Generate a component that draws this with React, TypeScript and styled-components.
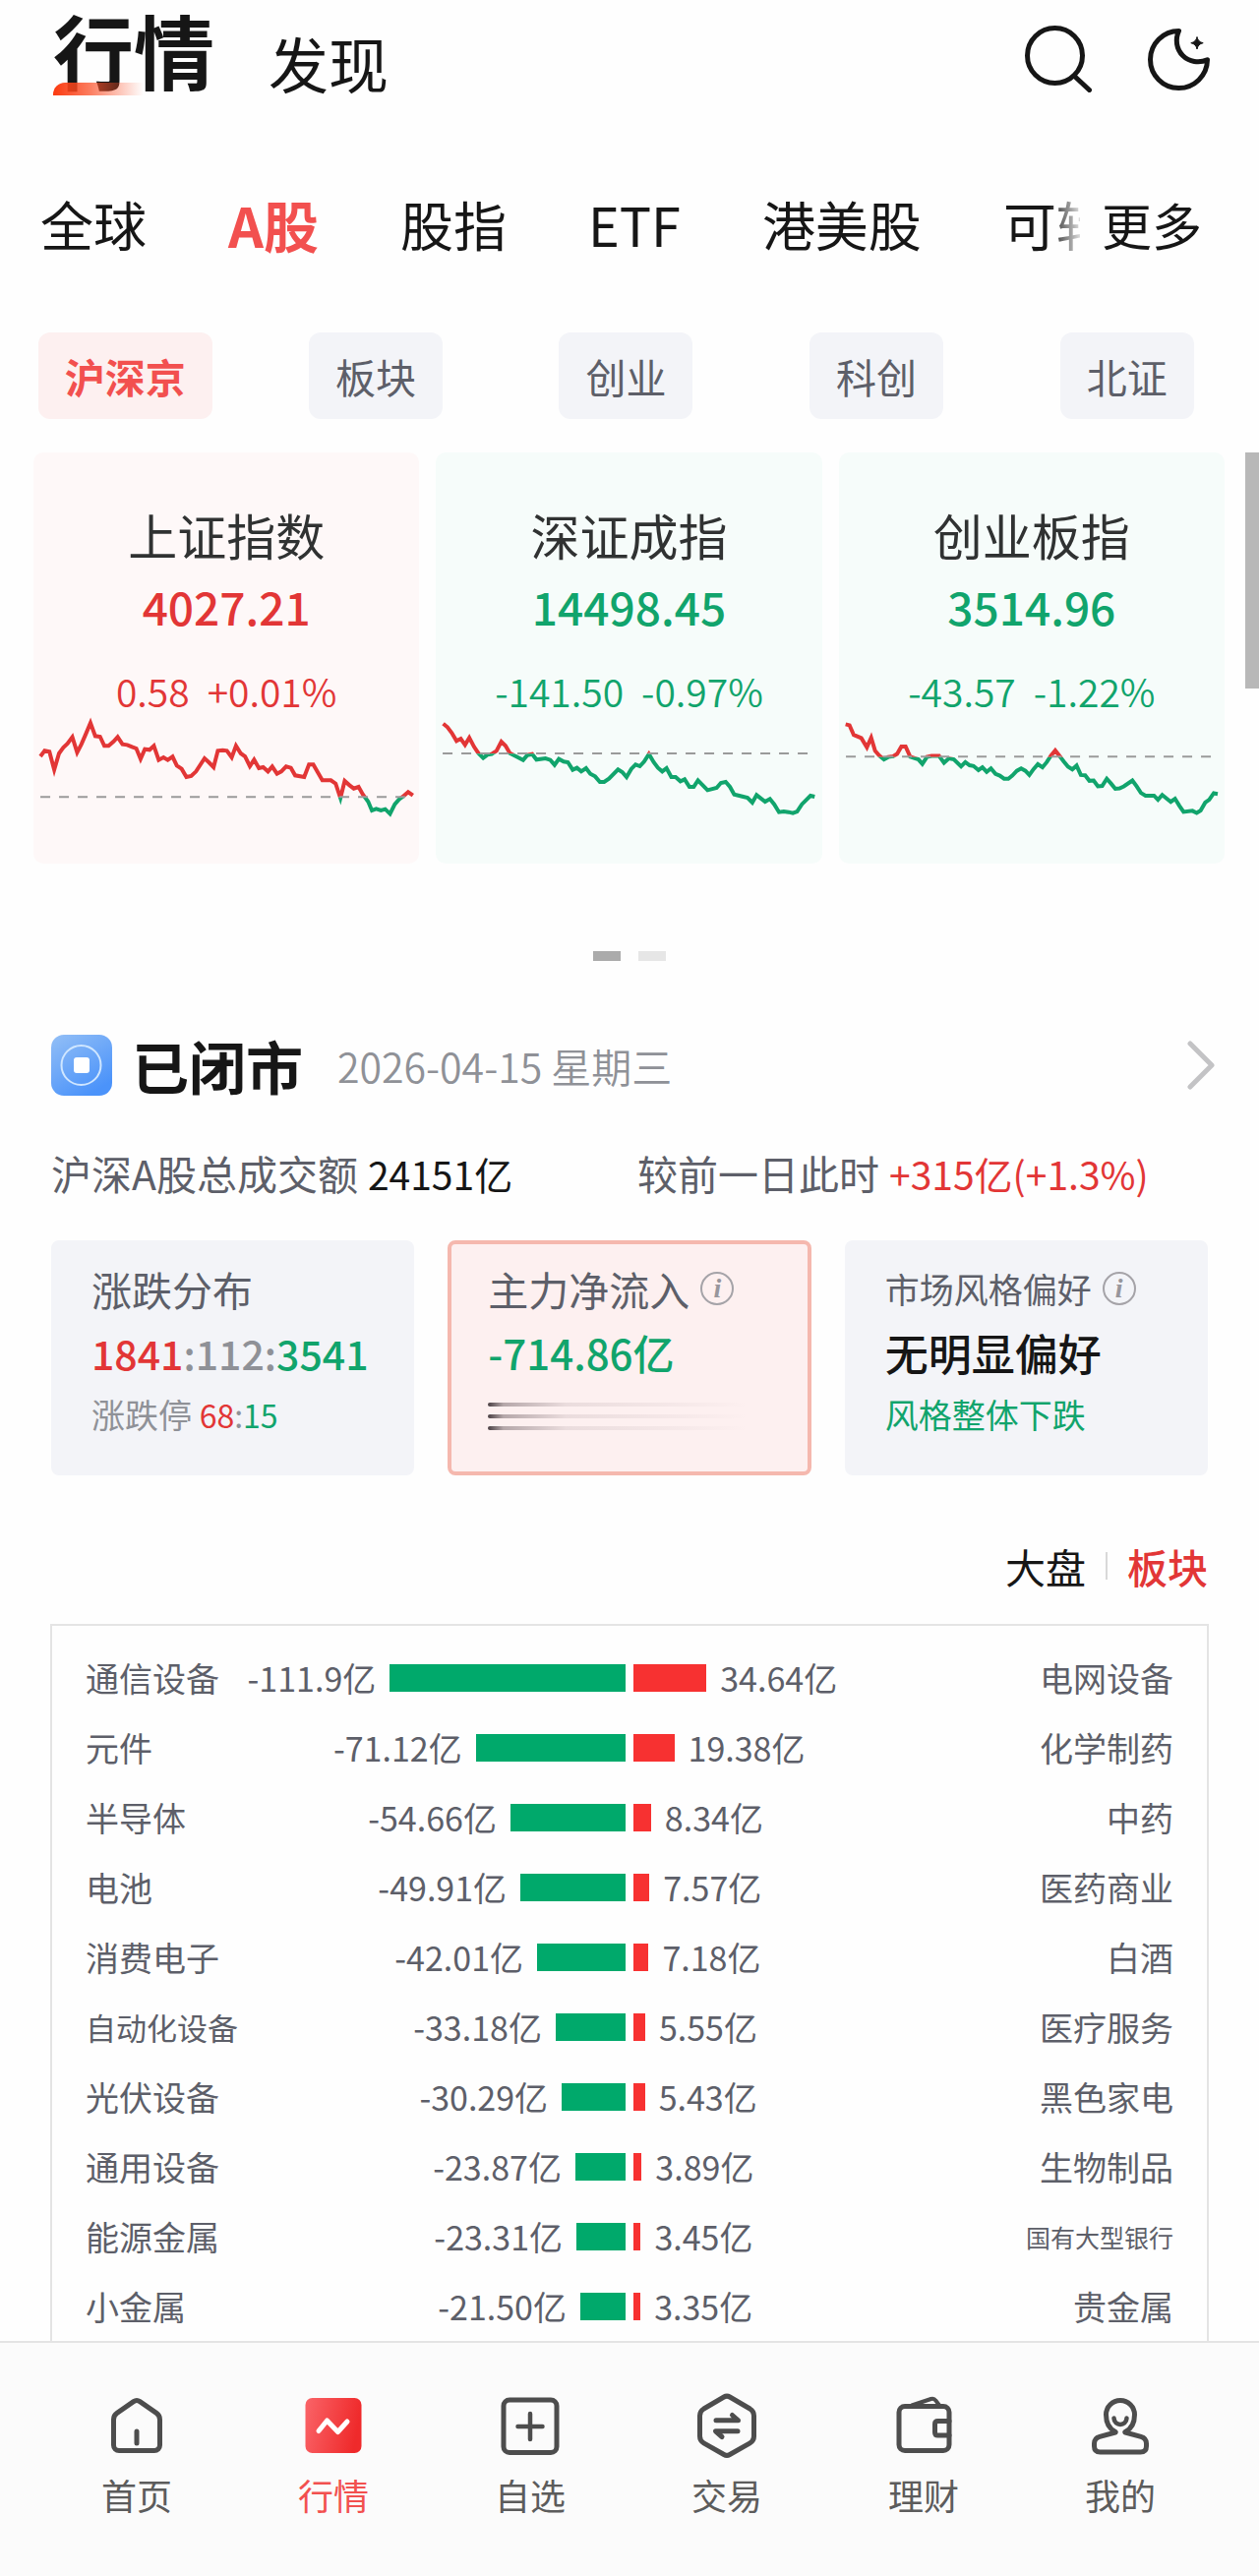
import React from "react";
import styled, { createGlobalStyle, css } from "styled-components";

const color = {
  ink: "#161616",
  slate: "#5d5f69",
  muted: "#8f9197",
  up: "#e23636",
  down: "#11a46c",
  barUp: "#f73131",
  barDown: "#00a96b",
  accent: "#f2504f",
  panel: "#f3f4f8",
  line: "#e4e4e4",
};

const GlobalStyle = createGlobalStyle`
  * { box-sizing: border-box; }
  body {
    margin: 0;
    background: #fefefe;
    color: ${color.ink};
    font-family: "Noto Sans CJK SC", "Noto Sans", sans-serif;
  }
  button {
    margin: 0;
    padding: 0;
    border: 0;
    background: none;
    color: inherit;
    font: inherit;
    white-space: nowrap;
    cursor: pointer;
  }
  h1, h2, h3, p { margin: 0; font-weight: 400; }
  a { color: inherit; text-decoration: none; }
  svg { display: block; }
`;

type Tone = "up" | "down" | "flat" | "ink";
const toneColor: Record<Tone, string> = {
  up: color.up,
  down: color.down,
  flat: color.muted,
  ink: color.ink,
};

const Page = styled.div`
  position: relative;
  display: flex;
  flex-direction: column;
`;

/* ---------- header ---------- */

const Header = styled.header`
  display: flex;
  align-items: flex-end;
  padding: 6px 47px 0 54px;
`;

const PageTitle = styled.h1`
  position: relative;
  font-size: 82px;
  line-height: 88px;
  font-weight: 700;

  &::after {
    content: "";
    position: absolute;
    left: 0;
    bottom: -3px;
    width: 92px;
    height: 13px;
    border-radius: 12px 0 0 0;
    background: linear-gradient(90deg, #fb3a10, rgba(251, 80, 40, 0.75) 40%, rgba(255, 120, 90, 0));
  }
`;

const DiscoverButton = styled.button`
  margin-left: 55px;
  font-size: 61px;
  line-height: 60px;
`;

const HeaderActions = styled.div`
  display: flex;
  gap: 55px;
  margin-left: auto;
`;

/* ---------- market tabs ---------- */

const MarketBar = styled.nav`
  display: flex;
  align-items: center;
  margin-top: 94px;
  padding: 0 58px 0 41px;
`;

const MarketTabs = styled.div`
  display: flex;
  flex: 1;
  gap: 83px;
  min-width: 0;
  overflow: hidden;
  mask-image: linear-gradient(90deg, #000 calc(100% - 32px), rgba(0, 0, 0, 0.15));
`;

const MarketTab = styled.button<{ $active?: boolean }>`
  flex: none;
  font-size: 54px;
  line-height: 80px;
  ${(p) =>
    p.$active &&
    css`
      color: ${color.accent};
      font-size: 56px;
      font-weight: 700;
    `}
`;

const MoreButton = styled.button`
  margin-left: 22px;
  font-size: 51px;
  line-height: 80px;
`;

const Chips = styled.div`
  display: grid;
  grid-template-columns: repeat(5, 1fr);
  justify-items: center;
  margin-top: 70px;
  padding-right: 7px;
`;

const Chip = styled.button<{ $active?: boolean }>`
  height: 88px;
  padding: 0 27px;
  border-radius: 12px;
  background: ${(p) => (p.$active ? "#fdf0f0" : color.panel)};
  color: ${(p) => (p.$active ? color.accent : color.slate)};
  font-size: 41px;
  font-weight: ${(p) => (p.$active ? 700 : 400)};
`;

/* ---------- index cards ---------- */

const IndexGrid = styled.section`
  display: grid;
  grid-template-columns: repeat(3, 1fr);
  gap: 17px;
  margin-top: 34px;
  padding: 0 35px 0 34px;
`;

const IndexCard = styled.article<{ $tone: Tone }>`
  padding-top: 53px;
  border-radius: 10px;
  background: ${(p) => (p.$tone === "up" ? "#fef8f8" : "#f6fcfa")};
  color: ${(p) => toneColor[p.$tone]};
  text-align: center;
`;

const IndexName = styled.h2`
  color: #303232;
  font-size: 50px;
  line-height: 60px;
`;

const IndexPrice = styled.p`
  margin-top: 13px;
  font-size: 46px;
  line-height: 60px;
  font-weight: 500;
`;

const IndexChange = styled.p`
  display: flex;
  justify-content: center;
  gap: 18px;
  margin-top: 35px;
  font-size: 39px;
  line-height: 42px;
  font-weight: 350;
`;

const ChartSvg = styled.svg`
  width: 100%;
  height: 155px;

  polyline,
  line {
    fill: none;
    vector-effect: non-scaling-stroke;
  }
`;

const ScrollThumb = styled.div`
  position: absolute;
  top: 460px;
  right: 0;
  width: 14px;
  height: 240px;
  background: #b8b8b8;
`;

const Pager = styled.div`
  display: flex;
  justify-content: center;
  gap: 18px;
  margin-top: 89px;
`;

const PagerDot = styled.span<{ $active?: boolean }>`
  width: 28px;
  height: 10px;
  background: ${(p) => (p.$active ? "#ababab" : "#e6e6e6")};
`;

/* ---------- market summary ---------- */

const Summary = styled.section`
  display: flex;
  flex-direction: column;
  padding: 0 52px;
`;

const SummaryHead = styled.div`
  display: flex;
  align-items: center;
  height: 62px;
  margin-top: 75px;
`;

const SummaryTitle = styled.h2`
  margin-left: 20px;
  font-size: 58px;
  line-height: 62px;
  font-weight: 700;
`;

const SummaryDate = styled.time`
  margin-left: 35px;
  color: ${color.muted};
  font-size: 41px;
  line-height: 62px;
  font-weight: 350;
`;

const HeadArrow = styled.button`
  margin-left: auto;
  margin-right: -8px;
`;

const Turnover = styled.div`
  display: grid;
  grid-template-columns: 1fr 1fr;
  margin-top: 53px;
  color: ${color.slate};
  font-size: 41px;
  line-height: 50px;
  white-space: nowrap;

  p + p {
    padding-left: 8px;
  }
`;

const Figure = styled.span<{ $tone: Tone }>`
  margin-left: 10px;
  color: ${(p) => toneColor[p.$tone]};
  font-size: 39px;
`;

const StatGrid = styled.div`
  display: grid;
  grid-template-columns: repeat(3, 1fr);
  gap: 34px;
  margin-top: 43px;
`;

const StatCard = styled.article<{ $selected?: boolean }>`
  height: 239px;
  padding: 15px 0 0 37px;
  border: 4px solid ${(p) => (p.$selected ? "#f5b8ae" : color.panel)};
  border-radius: 8px;
  background: ${(p) => (p.$selected ? "#fdf0f0" : color.panel)};
  white-space: nowrap;
`;

const StatTitle = styled.h3<{ $small?: boolean }>`
  display: flex;
  align-items: center;
  gap: 11px;
  color: ${color.slate};
  font-size: ${(p) => (p.$small ? 35 : 41)}px;
  line-height: 60px;
`;

const InfoButton = styled.button`
  width: 34px;
  height: 34px;
  border: 2px solid #a5a3a8;
  border-radius: 50%;
  color: #98969c;
  font-family: "Liberation Serif", serif;
  font-size: 28px;
  line-height: 30px;
  font-style: italic;
  font-weight: 700;
  text-align: center;
`;

const StatValue = styled.p<{ $tone: Tone; $size: number }>`
  color: ${(p) => toneColor[p.$tone]};
  font-size: ${(p) => p.$size}px;
  line-height: 70px;
  font-weight: 500;
`;

const StatNote = styled.p<{ $tone: Tone }>`
  color: ${(p) => toneColor[p.$tone]};
  font-size: 34px;
  line-height: 56px;
`;

const Ratio = styled.span`
  font-size: 32px;
`;

const Toned = styled.span<{ $tone: Tone }>`
  color: ${(p) => toneColor[p.$tone]};
`;

const FadingLines = styled.div`
  display: grid;
  gap: 8px;
  padding-top: 16px;
`;

const FadingLine = styled.span`
  width: 264px;
  height: 4px;
  border-radius: 2px;
  background: linear-gradient(
    90deg,
    #4a4044,
    rgba(110, 95, 100, 0.5) 6%,
    rgba(150, 130, 135, 0.18) 30%,
    rgba(150, 130, 135, 0)
  );
`;

/* ---------- sector flow ---------- */

const FlowSwitch = styled.div`
  display: flex;
  justify-content: flex-end;
  align-items: center;
  margin-top: 67px;
`;

const FlowOption = styled.button<{ $active?: boolean }>`
  color: ${(p) => (p.$active ? color.up : color.ink)};
  font-size: 41px;
  line-height: 50px;
  font-weight: ${(p) => (p.$active ? 500 : 400)};
`;

const FlowDivider = styled.span`
  width: 2px;
  height: 28px;
  margin: 0 20px;
  background: #d9d9d9;
`;

const FlowTable = styled.table`
  display: block;
  margin: 34px -1px 0;
  padding: 17px 34px 0;
  border: 2px solid ${color.line};
  border-bottom: 0;
  color: ${color.slate};
  font-size: 34px;
  line-height: 40px;

  tbody {
    display: block;
  }
`;

const FlowRow = styled.tr`
  display: grid;
  grid-template-columns: 156px 1fr 1fr 156px;
  align-items: center;
  height: 71px;
  white-space: nowrap;
`;

const labelSize = (name: string) => (name.length > 5 ? 25 : name.length > 4 ? 31 : 34);

const SectorName = styled.td<{ $name: string; $end?: boolean }>`
  padding: 0;
  font-size: ${(p) => labelSize(p.$name)}px;
  text-align: ${(p) => (p.$end ? "right" : "left")};
`;

const FlowCell = styled.td<{ $side: "out" | "in" }>`
  display: flex;
  align-items: center;
  justify-content: ${(p) => (p.$side === "out" ? "flex-end" : "flex-start")};
  gap: 14px;
  padding: ${(p) => (p.$side === "out" ? "0 4px 0 0" : "0 0 0 4px")};
`;

const FlowBar = styled.span<{ $side: "out" | "in" }>`
  flex: none;
  height: 28px;
  background: ${(p) => (p.$side === "out" ? color.barDown : color.barUp)};
`;

/* ---------- bottom bar ---------- */

const BottomBar = styled.nav`
  display: grid;
  grid-template-columns: repeat(6, 1fr);
  height: 239px;
  padding: 50px 41px 0 39px;
  border-top: 2px solid ${color.line};
  background: #fbfbfb;
`;

const BottomLink = styled.a<{ $active?: boolean }>`
  display: flex;
  flex-direction: column;
  align-items: center;
  gap: 11px;
  color: ${(p) => (p.$active ? color.accent : "#5c5c5c")};
  font-size: 36px;
  line-height: 50px;
`;

const NavSvg = styled.svg`
  width: 68px;
  height: 68px;
  fill: none;
  stroke: #4d4d4d;
  stroke-width: 5;
  stroke-linecap: round;
  stroke-linejoin: round;
`;

/* ---------- data ---------- */

interface IndexQuote {
  id: string;
  name: string;
  price: string;
  change: string;
  percent: string;
  tone: Tone;
  view: [number, number, number, number];
  base: number;
  points: string;
}

const indices: IndexQuote[] = [
  {
    id: "sh",
    name: "上证指数",
    price: "4027.21",
    change: "0.58",
    percent: "+0.01%",
    tone: "up",
    view: [62, 819, 724, 465],
    base: 1081,
    points:
      "75,957 83,940 92,943 101,998 110,948 118,930 126,918 135,898 144,945 152,920 160,890 169,855 178,895 187,897 195,925 203,925 212,912 220,898 229,920 238,922 247,928 255,933 263,965 271,935 280,937 288,925 297,968 306,960 314,968 323,958 331,985 340,995 349,1020 358,1017 367,1003 383,963 391,975 400,990 408,940 417,938 425,940 434,960 442,925 451,948 459,957 468,987 476,967 485,993 493,990 502,1003 510,988 519,1010 527,1003 536,988 545,992 553,1015 570,1020 579,982 587,982 604,1030 620,1030 629,1040 638,1084 646,1032 655,1045 663,1055 672,1050 680,1073 690,1095 697,1122 705,1117 714,1122 722,1118 731,1132 740,1103 748,1088 755,1080 765,1066 774,1076",
  },
  {
    id: "sz",
    name: "深证成指",
    price: "14498.45",
    change: "-141.50",
    percent: "-0.97%",
    tone: "down",
    view: [818, 819, 724, 465],
    base: 948,
    points:
      "832,857 840,868 848,885 857,910 865,903 873,922 881,900 890,928 898,947 907,962 915,952 923,950 932,940 941,912 949,925 957,947 966,955 982,968 990,953 999,950 1007,967 1024,963 1033,968 1041,983 1049,965 1058,973 1066,975 1075,998 1083,992 1091,1003 1100,993 1108,1010 1117,1018 1126,1035 1134,1035 1143,1025 1160,997 1168,1005 1176,1020 1185,995 1193,982 1201,987 1209,973 1218,950 1227,975 1235,992 1243,1003 1251,993 1260,1020 1268,1020 1277,1033 1285,1027 1294,1050 1302,1050 1310,1030 1319,1045 1328,1060 1345,1053 1353,1038 1362,1035 1370,1050 1378,1073 1395,1080 1403,1083 1412,1098 1420,1075 1436,1095 1445,1087 1453,1103 1462,1127 1471,1125 1480,1127 1488,1130 1496,1125 1505,1103 1513,1090 1521,1077 1529,1080",
  },
  {
    id: "cy",
    name: "创业板指",
    price: "3514.96",
    change: "-43.57",
    percent: "-1.22%",
    tone: "down",
    view: [40, 778, 1176, 442],
    base: 910,
    points:
      "60,816 72,819 85,847 108,856 125,883 138,855 150,893 163,907 177,918 190,911 205,909 217,902 230,881 243,881 257,910 282,918 294,931 308,911 322,908 345,908 360,928 375,915 390,918 412,938 425,926 438,935 450,937 465,949 477,941 490,954 503,944 517,960 530,965 543,974 556,974 568,965 582,951 595,944 608,951 620,963 633,946 646,932 660,941 673,926 686,907 699,892 712,908 725,924 738,939 751,947 764,936 777,963 790,964 803,980 816,979 829,996 842,995 856,974 869,988 882,1003 895,1002 908,996 934,979 947,996 960,1015 974,1023 1000,1023 1012,1035 1025,1021 1051,1041 1064,1032 1077,1052 1090,1070 1117,1067 1130,1073 1142,1066 1156,1043 1168,1035 1182,1016 1194,1018",
  },
];

interface SectorFlow {
  out: string;
  outValue: string;
  in: string;
  inValue: string;
}

const flows: SectorFlow[] = [
  { out: "通信设备", outValue: "-111.9", in: "电网设备", inValue: "34.64" },
  { out: "元件", outValue: "-71.12", in: "化学制药", inValue: "19.38" },
  { out: "半导体", outValue: "-54.66", in: "中药", inValue: "8.34" },
  { out: "电池", outValue: "-49.91", in: "医药商业", inValue: "7.57" },
  { out: "消费电子", outValue: "-42.01", in: "白酒", inValue: "7.18" },
  { out: "自动化设备", outValue: "-33.18", in: "医疗服务", inValue: "5.55" },
  { out: "光伏设备", outValue: "-30.29", in: "黑色家电", inValue: "5.43" },
  { out: "通用设备", outValue: "-23.87", in: "生物制品", inValue: "3.89" },
  { out: "能源金属", outValue: "-23.31", in: "国有大型银行", inValue: "3.45" },
  { out: "小金属", outValue: "-21.50", in: "贵金属", inValue: "3.35" },
];

const LARGEST_FLOW = 111.9;
const LARGEST_BAR = 61;
const barWidth = (value: string) =>
  `${(Math.abs(parseFloat(value)) / LARGEST_FLOW) * LARGEST_BAR}%`;

/* ---------- pieces ---------- */

function Sparkline({ quote }: { quote: IndexQuote }) {
  const [x, y, w, h] = quote.view;
  const inset = w * 0.018;
  return (
    <ChartSvg viewBox={quote.view.join(" ")} preserveAspectRatio="none" aria-hidden="true">
      <clipPath id={`${quote.id}-above`}>
        <rect x={x} y={y} width={w} height={quote.base - y + 1} />
      </clipPath>
      <clipPath id={`${quote.id}-below`}>
        <rect x={x} y={quote.base + 1} width={w} height={y + h - quote.base} />
      </clipPath>
      <g clipPath={`url(#${quote.id}-above)`}>
        <polyline points={quote.points} stroke={color.up} strokeWidth="4" />
      </g>
      <g clipPath={`url(#${quote.id}-below)`}>
        <polyline points={quote.points} stroke={color.down} strokeWidth="4" />
      </g>
      <line
        x1={x + inset}
        x2={x + w - inset}
        y1={quote.base}
        y2={quote.base}
        stroke="#9a9a9a"
        strokeWidth="2"
        strokeDasharray="10 9"
      />
    </ChartSvg>
  );
}

const HomeIcon = () => (
  <NavSvg viewBox="0 0 68 68" aria-hidden="true">
    <path d="M10.5 28c0-3 1-5 3.400-6.600L30.800 9.600a5.500 5.500 0 0 1 6.400 0l16.900 11.800C56.500 23 57.500 25 57.500 28v26a5.500 5.500 0 0 1-5.500 5.500H16a5.500 5.500 0 0 1-5.500-5.500Z" />
    <path d="M34 40v12" />
  </NavSvg>
);

const QuotesIcon = () => (
  <NavSvg viewBox="0 0 68 68" aria-hidden="true">
    <defs>
      <linearGradient id="quotes-fill" x1="0" y1="0" x2="1" y2="0.2">
        <stop offset="0" stopColor="#fa6468" />
        <stop offset="1" stopColor="#ef2a2b" />
      </linearGradient>
    </defs>
    <rect x="5.500" y="6" width="57" height="56" rx="7" fill="url(#quotes-fill)" stroke="none" />
    <path d="M19 39.500 27.500 29 38.500 40.500 48 30" stroke="#fff" />
  </NavSvg>
);

const WatchlistIcon = () => (
  <NavSvg viewBox="0 0 68 68" aria-hidden="true">
    <rect x="7" y="8" width="54" height="53.500" rx="6" />
    <path d="M21.500 35h25M34 22v26" strokeWidth="4.500" />
  </NavSvg>
);

const TradeIcon = () => (
  <NavSvg viewBox="0 0 68 68" aria-hidden="true">
    <path d="M31 5q3-1.800 6 0l20.500 12Q61.500 19.500 61.500 24v21q0 4.500-4 6.800L37 63.500q-3 1.800-6 0L10.500 51.800Q6.500 49.500 6.500 45V24q0-4.500 4-7Z" />
    <path d="M23 28.800h22.500L39.500 23.500M45 39.800H22.500L29 45.500" />
  </NavSvg>
);

const WealthIcon = () => (
  <NavSvg viewBox="0 0 68 68" aria-hidden="true">
    <rect x="9" y="14.500" width="51" height="45" rx="6" />
    <path d="M60 29.500H48.500q-3 0-3 3v8.500q0 3 3 3H60" />
    <path d="m22 13.500 19.500-6.500q3-1 4.800 1.600L50.500 14" strokeWidth="4" />
  </NavSvg>
);

const ProfileIcon = () => (
  <NavSvg viewBox="0 0 68 68" aria-hidden="true">
    <path d="M29 40.500C23 37.500 19.500 31 19.500 23a14.500 14.500 0 0 1 29 0c0 8-3.500 14.500-9.500 17.500" />
    <path d="M29 41 13 45.300q-5.500 1.500-5.500 7V55q0 6 6 6h41q6 0 6-6v-2.700q0-5.500-5.500-7L39 41" />
    <path d="M27.500 26.500c.5 8.500 12.500 8.500 13 0" strokeWidth="4.500" />
  </NavSvg>
);

const bottomItems = [
  { label: "首页", Icon: HomeIcon },
  { label: "行情", Icon: QuotesIcon, active: true },
  { label: "自选", Icon: WatchlistIcon },
  { label: "交易", Icon: TradeIcon },
  { label: "理财", Icon: WealthIcon },
  { label: "我的", Icon: ProfileIcon },
];

export default function App() {
  return (
    <Page>
      <GlobalStyle />

      <Header>
        <PageTitle>行情</PageTitle>
        <DiscoverButton type="button">发现</DiscoverButton>
        <HeaderActions>
          <button type="button" aria-label="搜索">
            <svg width="68" height="68" viewBox="0 0 68 68" fill="none" stroke={color.ink} strokeWidth="5" strokeLinecap="round">
              <circle cx="30.500" cy="30.500" r="28" />
              <path d="m51 52 14.500 13.500" />
            </svg>
          </button>
          <button type="button" aria-label="夜间模式">
            <svg width="68" height="68" viewBox="0 0 68 68" fill="none" stroke={color.ink} strokeWidth="5" strokeLinejoin="round">
              <path d="M33.500 5.500A29 29 0 1 0 62.500 34.800C54 38.500 44 37 37.500 30.500 31 24 29.500 14 33.500 5.500Z" />
              <path d="M52 11.500q1 5.200 6.200 6.200Q53 18.700 52 24q-1-5.300-6.200-6.300Q51 16.700 52 11.500Z" fill={color.ink} strokeWidth="1" />
            </svg>
          </button>
        </HeaderActions>
      </Header>

      <MarketBar>
        <MarketTabs>
          <MarketTab type="button">全球</MarketTab>
          <MarketTab type="button" $active>A股</MarketTab>
          <MarketTab type="button">股指</MarketTab>
          <MarketTab type="button">ETF</MarketTab>
          <MarketTab type="button">港美股</MarketTab>
          <MarketTab type="button">可转</MarketTab>
        </MarketTabs>
        <MoreButton type="button">更多</MoreButton>
      </MarketBar>

      <Chips>
        <Chip type="button" $active>沪深京</Chip>
        <Chip type="button">板块</Chip>
        <Chip type="button">创业</Chip>
        <Chip type="button">科创</Chip>
        <Chip type="button">北证</Chip>
      </Chips>

      <IndexGrid>
        {indices.map((quote) => (
          <IndexCard key={quote.id} $tone={quote.tone}>
            <IndexName>{quote.name}</IndexName>
            <IndexPrice>{quote.price}</IndexPrice>
            <IndexChange>
              <span>{quote.change}</span>
              <span>{quote.percent}</span>
            </IndexChange>
            <Sparkline quote={quote} />
          </IndexCard>
        ))}
      </IndexGrid>
      <ScrollThumb />

      <Pager>
        <PagerDot $active />
        <PagerDot />
      </Pager>

      <Summary>
        <SummaryHead>
          <svg width="62" height="62" viewBox="0 0 62 62" aria-hidden="true">
            <defs>
              <linearGradient id="status-fill" x1="0" y1="0" x2="0.600" y2="1">
                <stop offset="0" stopColor="#93bff6" />
                <stop offset="1" stopColor="#4b93fa" />
              </linearGradient>
            </defs>
            <rect width="62" height="62" rx="13" fill="url(#status-fill)" />
            <circle cx="30.500" cy="31" r="20" fill="none" stroke="#cfe6ff" strokeWidth="2" />
            <rect x="23" y="23" width="16" height="16" rx="3" fill="#fff" />
          </svg>
          <SummaryTitle>已闭市</SummaryTitle>
          <SummaryDate dateTime="2026-04-15">2026-04-15 星期三</SummaryDate>
          <HeadArrow type="button" aria-label="查看详情">
            <svg width="30" height="50" viewBox="0 0 30 50" fill="none" stroke="#c3c3c5" strokeWidth="5" strokeLinecap="round" strokeLinejoin="round">
              <path d="m4 3 22 22L4 47" />
            </svg>
          </HeadArrow>
        </SummaryHead>

        <Turnover>
          <p>
            沪深A股总成交额<Figure $tone="ink">24151亿</Figure>
          </p>
          <p>
            较前一日此时<Figure $tone="up">+315亿(+1.3%)</Figure>
          </p>
        </Turnover>

        <StatGrid>
          <StatCard>
            <StatTitle>涨跌分布</StatTitle>
            <StatValue $tone="flat" $size={41}>
              <Toned $tone="up">1841</Toned>:112:<Toned $tone="down">3541</Toned>
            </StatValue>
            <StatNote $tone="flat">
              涨跌停{" "}
              <Ratio>
                <Toned $tone="up">68</Toned>:<Toned $tone="down">15</Toned>
              </Ratio>
            </StatNote>
          </StatCard>
          <StatCard $selected>
            <StatTitle>
              主力净流入<InfoButton type="button" aria-label="主力净流入说明">i</InfoButton>
            </StatTitle>
            <StatValue $tone="down" $size={42}>-714.86亿</StatValue>
            <FadingLines>
              <FadingLine />
              <FadingLine />
              <FadingLine />
            </FadingLines>
          </StatCard>
          <StatCard>
            <StatTitle $small>
              市场风格偏好<InfoButton type="button" aria-label="市场风格偏好说明">i</InfoButton>
            </StatTitle>
            <StatValue $tone="ink" $size={44}>无明显偏好</StatValue>
            <StatNote $tone="down">风格整体下跌</StatNote>
          </StatCard>
        </StatGrid>

        <FlowSwitch>
          <FlowOption type="button">大盘</FlowOption>
          <FlowDivider />
          <FlowOption type="button" $active>板块</FlowOption>
        </FlowSwitch>

        <FlowTable>
          <tbody>
            {flows.map((row) => (
              <FlowRow key={row.out}>
                <SectorName $name={row.out}>{row.out}</SectorName>
                <FlowCell $side="out">
                  <span>{row.outValue}亿</span>
                  <FlowBar $side="out" style={{ width: barWidth(row.outValue) }} />
                </FlowCell>
                <FlowCell $side="in">
                  <FlowBar $side="in" style={{ width: barWidth(row.inValue) }} />
                  <span>{row.inValue}亿</span>
                </FlowCell>
                <SectorName $name={row.in} $end>{row.in}</SectorName>
              </FlowRow>
            ))}
          </tbody>
        </FlowTable>
      </Summary>

      <BottomBar>
        {bottomItems.map(({ label, Icon, active }) => (
          <BottomLink key={label} href="#" $active={active}>
            <Icon />
            {label}
          </BottomLink>
        ))}
      </BottomBar>
    </Page>
  );
}
